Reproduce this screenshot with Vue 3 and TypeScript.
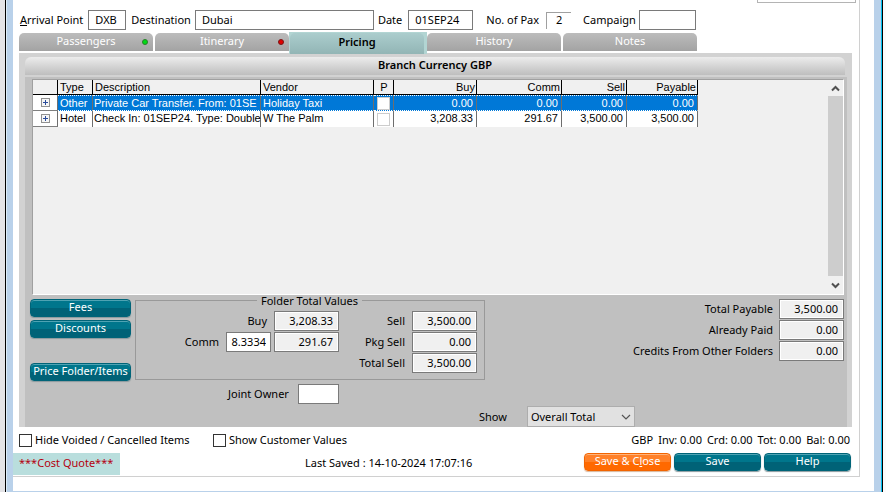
<script setup lang="ts">
import { ref } from 'vue'

interface Tab {
  name: string
  status?: 'ok' | 'alert'
}

interface Item {
  type: string
  description: string
  vendor: string
  picked: boolean
  buy: string
  comm: string
  sell: string
  payable: string
}

const tabs: Tab[] = [
  { name: 'Passengers', status: 'ok' },
  { name: 'Itinerary', status: 'alert' },
  { name: 'Pricing' },
  { name: 'History' },
  { name: 'Notes' },
]
const activeTab = ref('Pricing')

const items = ref<Item[]>([
  {
    type: 'Other', description: 'Private Car Transfer. From: 01SE', vendor: 'Holiday Taxi',
    picked: false, buy: '0.00', comm: '0.00', sell: '0.00', payable: '0.00',
  },
  {
    type: 'Hotel', description: 'Check In: 01SEP24. Type: Double', vendor: 'W The Palm',
    picked: false, buy: '3,208.33', comm: '291.67', sell: '3,500.00', payable: '3,500.00',
  },
])
const selectedRow = ref(0)

const totals = [
  { id: 'total-payable', label: 'Total Payable', value: '3,500.00' },
  { id: 'already-paid', label: 'Already Paid', value: '0.00' },
  { id: 'credits', label: 'Credits From Other Folders', value: '0.00' },
]

const arrival = ref('DXB')
const destination = ref('Dubai')
const date = ref('01SEP24')
const campaign = ref('')
const commRate = ref('8.3334')
const jointOwner = ref('')
const show = ref('Overall Total')
const hideVoided = ref(false)
const showCustomer = ref(false)
</script>

<template>
  <div class="desktop">
    <div class="window">
      <main class="sheet">
        <div class="upper"><div class="upper-box"></div></div>

        <form class="trip" @submit.prevent>
          <label for="arrival"><u>A</u>rrival Point</label>
          <input id="arrival" v-model="arrival" class="field w-code" />
          <label for="destination">Destination</label>
          <input id="destination" v-model="destination" class="field w-place" />
          <label for="date">Date</label>
          <input id="date" v-model="date" class="field w-date" />
          <label for="pax" class="pax-label">No. of Pax</label>
          <output id="pax" class="pax">2</output>
          <label for="campaign" class="campaign-label">Campaign</label>
          <input id="campaign" v-model="campaign" class="field w-campaign" />
        </form>

        <nav class="tabs">
          <button
            v-for="tab in tabs"
            :key="tab.name"
            type="button"
            class="tab"
            :class="{ active: tab.name === activeTab }"
            @click="activeTab = tab.name"
          >
            <span class="tab-face">{{ tab.name }}</span>
            <i v-if="tab.status" class="dot" :class="tab.status"></i>
          </button>
        </nav>

        <section class="panel">
          <h1 class="panel-title">Branch Currency GBP</h1>
          <div class="panel-body">
            <div class="grid-box">
              <div class="grid-area">
                <table class="items">
                  <colgroup>
                    <col class="c-expand" /><col class="c-type" /><col class="c-desc" /><col class="c-vendor" />
                    <col class="c-p" /><col class="c-buy" /><col class="c-comm" /><col class="c-sell" /><col class="c-pay" />
                  </colgroup>
                  <thead>
                    <tr>
                      <th></th>
                      <th>Type</th>
                      <th>Description</th>
                      <th>Vendor</th>
                      <th class="mid">P</th>
                      <th class="num">Buy</th>
                      <th class="num">Comm</th>
                      <th class="num">Sell</th>
                      <th class="num">Payable</th>
                    </tr>
                  </thead>
                  <tbody>
                    <tr
                      v-for="(item, i) in items"
                      :key="item.type"
                      :class="{ selected: i === selectedRow }"
                      @click="selectedRow = i"
                    >
                      <td class="expand">
                        <button type="button" class="plus" :aria-label="'Expand ' + item.type">
                          <svg width="9" height="9" viewBox="0 0 9 9" shape-rendering="crispEdges">
                            <rect x="0.5" y="0.5" width="8" height="8" fill="#f6f6f6" stroke="#919191" />
                            <path d="M2 4.5h5M4.5 2v5" stroke="#2b4c9b" />
                          </svg>
                        </button>
                      </td>
                      <td>{{ item.type }}</td>
                      <td class="desc">{{ item.description }}</td>
                      <td>{{ item.vendor }}</td>
                      <td class="pick">
                        <input v-model="item.picked" type="checkbox" :aria-label="'P ' + item.type" />
                      </td>
                      <td class="num">{{ item.buy }}</td>
                      <td class="num">{{ item.comm }}</td>
                      <td class="num">{{ item.sell }}</td>
                      <td class="num">{{ item.payable }}</td>
                    </tr>
                  </tbody>
                </table>
              </div>
              <div class="scrollbar">
                <button type="button" class="arrow" aria-label="Scroll up">
                  <svg width="9" height="7" viewBox="0 0 9 7"><path d="M1 5.5 4.5 2 8 5.5" fill="none" stroke="#505050" stroke-width="2" /></svg>
                </button>
                <div class="thumb"></div>
                <button type="button" class="arrow down" aria-label="Scroll down">
                  <svg width="9" height="7" viewBox="0 0 9 7"><path d="M1 1.5 4.5 5 8 1.5" fill="none" stroke="#505050" stroke-width="2" /></svg>
                </button>
              </div>
            </div>

            <div class="summary">
              <div class="actions">
                <button type="button" class="btn">Fees</button>
                <button type="button" class="btn">Discounts</button>
                <button type="button" class="btn last">Price Folder/Items</button>
              </div>

              <fieldset class="folder">
                <legend>Folder Total Values</legend>
                <div class="folder-grid">
                  <label for="buy" class="wide">Buy</label>
                  <input id="buy" class="field money" value="3,208.33" readonly />
                  <label for="sell">Sell</label>
                  <input id="sell" class="field money" value="3,500.00" readonly />

                  <label for="comm-rate">Comm</label>
                  <input id="comm-rate" v-model="commRate" class="field rate" />
                  <input class="field money" value="291.67" aria-label="Comm amount" readonly />
                  <label for="pkg">Pkg Sell</label>
                  <input id="pkg" class="field money" value="0.00" readonly />

                  <label for="total-sell" class="to-sell">Total Sell</label>
                  <input id="total-sell" class="field money" value="3,500.00" readonly />
                </div>
              </fieldset>

              <div class="totals">
                <template v-for="t in totals" :key="t.id">
                  <label :for="t.id">{{ t.label }}</label>
                  <input :id="t.id" class="field money" :value="t.value" readonly />
                </template>
              </div>
            </div>

            <div class="owner">
              <label for="owner">Joint Owner</label>
              <input id="owner" v-model="jointOwner" class="field" />
            </div>

            <div class="show">
              <label for="show">Show</label>
              <div class="select">
                <select id="show" v-model="show">
                  <option>Overall Total</option>
                </select>
                <svg width="10" height="6" viewBox="0 0 10 6"><path d="M1 1l4 4 4-4" fill="none" stroke="#555" stroke-width="1.2" /></svg>
              </div>
            </div>
          </div>
        </section>

        <div class="options">
          <label class="check"><input v-model="hideVoided" type="checkbox" />Hide Voided / Cancelled Items</label>
          <label class="check"><input v-model="showCustomer" type="checkbox" />Show Customer Values</label>
          <p class="balances">
            <span>GBP</span><span>Inv: 0.00</span><span>Crd: 0.00</span><span>Tot: 0.00</span><span>Bal: 0.00</span>
          </p>
        </div>

        <footer class="footer">
          <span class="quote">***Cost Quote***</span>
          <span class="saved">Last Saved : 14-10-2024 17:07:16</span>
          <div class="footer-actions">
            <button type="button" class="btn orange">Save &amp; C<u>l</u>ose</button>
            <button type="button" class="btn">Save</button>
            <button type="button" class="btn">Help</button>
          </div>
        </footer>
      </main>
    </div>
  </div>
</template>

<style>
body {
  margin: 0;
  background: #fbfbfb;
}
</style>

<style scoped>
* {
  box-sizing: border-box;
}

.desktop {
  min-height: 100vh;
  display: flex;
  padding: 0 3px 0 0;
  border-left: 5px solid #e3e3e6;
  font: 11px/14px "Noto Sans", "Open Sans", sans-serif;
  color: #000;
}

.window {
  flex: 1;
  min-width: 0;
  display: flex;
  border-left: 1px solid #000;
  border-right: 1px solid #000;
  box-shadow: inset 1px 0 #dcecf8, inset -1px 0 #00c0f0;
  background: #b9d1ea;
  padding: 0 8px 1px 7px;
}

.sheet {
  flex: 1;
  min-width: 0;
  background: linear-gradient(#d0d0d0, #d0d0d0) right 14px top / 1px 476px no-repeat, #fff;
}

button,
input,
select {
  font: inherit;
  color: inherit;
  margin: 0;
}

label {
  white-space: nowrap;
}

.upper {
  height: 10px;
  padding-right: 18px;
  display: flex;
  justify-content: flex-end;
}

.upper-box {
  width: 99px;
  height: 3px;
  border: 1px solid #b4b4b4;
  border-top: 0;
}

.field {
  height: 20px;
  min-width: 0;
  padding: 0 6px 1px;
  border: 1px solid #7a7a7a;
  border-radius: 0;
  background: #fff;
  outline: none;
}

.field[readonly] {
  background: #f0f0f0;
  box-shadow: inset 0 0 0 1px #fff;
}

.trip {
  display: flex;
  align-items: center;
  height: 20px;
  padding-left: 7px;
}

.trip .w-code { width: 38px; margin: 0 5px; }
.trip .w-place { width: 179px; margin: 0 4px; }
.trip .w-date { width: 65px; margin-left: 6px; }
.trip .w-campaign { width: 57px; margin-left: 3px; }

.pax-label { margin-left: 13px; }
.campaign-label { margin-left: 12px; }

.pax {
  width: 25px;
  height: 17px;
  margin-left: 7px;
  text-align: center;
  border: 1px solid #a0a0a0;
  border-right: 0;
  border-bottom: 0;
}

.tabs {
  display: flex;
  align-items: flex-start;
  gap: 2px;
  height: 23px;
  padding: 3px 0 0 6px;
}

.tab {
  position: relative;
  width: 134px;
  height: 18px;
  padding: 0;
  border: 0;
  border-radius: 5px 5px 0 0;
  background: linear-gradient(#bcbcbc, #a3a3a3);
  color: #fff;
  line-height: 16px;
}

.tab-face {
  display: block;
  height: 18px;
}

.tab.active {
  width: 138px;
  height: 22px;
  margin: -1px -2px 0;
  padding: 1px 3px 0 1px;
  border-radius: 0;
  background: #b2d5d3;
  color: #000;
  font-weight: 600;
  line-height: 18px;
  z-index: 1;
}

.tab.active .tab-face {
  height: 21px;
  border-radius: 5px 5px 0 0;
  background: linear-gradient(#abcdcd, #92b5b5);
}

.dot {
  position: absolute;
  right: 5px;
  top: 6px;
  width: 6px;
  height: 6px;
  border: 1px solid #444;
  border-radius: 50%;
}

.dot.ok { background: #00dc14; border-color: #2a7f2a; }
.dot.alert { background: #e00000; border-color: #7a1515; }

.panel {
  margin: 0 22px 0 6px;
  padding: 4px 5px 0 6px;
  background: #d2d2d2;
}

.panel-title {
  margin: 0 2px 2px 0;
  height: 18px;
  border-radius: 6px 6px 0 0;
  background: linear-gradient(#ececec, #bebebe);
  font-size: 11px;
  font-weight: 600;
  line-height: 16px;
  text-align: center;
}

.panel-body {
  background: #c0c0c0;
  padding: 2px 3px 0 5px;
}

.grid-box {
  display: flex;
  height: 216px;
  margin-left: 2px;
  border: 1px solid #fff;
  border-top-color: #a0a0a0;
  border-left-color: #a0a0a0;
  background: #f0f0f0;
}

.grid-area {
  flex: 1;
  min-width: 0;
  overflow: hidden;
}

.items {
  table-layout: fixed;
  width: 665px;
  border-collapse: separate;
  border-spacing: 0;
  font: 11px/13px "Liberation Sans", Arial, sans-serif;
}

.c-expand { width: 25px; }
.c-type { width: 35px; }
.c-desc { width: 168px; }
.c-vendor { width: 113px; }
.c-p { width: 20px; }
.c-buy { width: 83px; }
.c-comm { width: 85px; }
.c-sell { width: 65px; }
.c-pay { width: 71px; }

.items th {
  height: 15px;
  padding: 0 1px 0 2px;
  border-right: 1px solid #000;
  border-bottom: 1px solid #000;
  font-weight: 400;
  text-align: left;
}

.items td {
  height: 16px;
  padding: 0 3px 1px 2px;
  border-right: 1px solid #6e6e6e;
  background: #fff;
  white-space: nowrap;
}

.items td.desc { padding: 0 0 1px 1px; }

.items .num { text-align: right; }
.items .mid { text-align: center; }

.items td.expand {
  padding: 0;
  border-bottom: 1px solid #808080;
  text-align: center;
}

.plus {
  display: block;
  width: 9px;
  height: 9px;
  margin: 0 auto;
  padding: 0;
  border: 0;
  background: none;
}

.plus svg { display: block; }

.items .selected td:not(.expand) {
  background: #0078d7;
  color: #fff;
  border-top: 1px dotted #fff;
  border-bottom: 1px dotted #fff;
  padding-bottom: 0;
}

.items td.pick { padding: 0; }

.pick input {
  appearance: none;
  display: block;
  width: 13px;
  height: 13px;
  margin: 1px auto 0;
  border: 1px solid #ccc;
  background: #fff;
}

.scrollbar {
  display: flex;
  flex-direction: column;
  width: 15px;
}

.arrow {
  display: grid;
  place-items: center;
  height: 16px;
  padding: 0;
  border: 0;
  background: #f0f0f0;
}

.arrow.down { height: 18px; }

.thumb {
  flex: 1;
  background: #cdcdcd;
}

.summary {
  display: flex;
  gap: 4px;
  height: 82px;
  margin-top: 4px;
}

.actions {
  display: flex;
  flex-direction: column;
  gap: 3px;
  width: 101px;
}

.btn {
  height: 18px;
  padding: 0 0 2px;
  border: 1px solid #006478;
  border-radius: 4px;
  background: linear-gradient(#00768c 50%, #006277 50%);
  box-shadow: inset 0 1px #4fa3b3, 0 1px 1px #8a9a9e;
  color: #fff;
  line-height: 14px;
  white-space: nowrap;
}

.btn.last { margin-top: auto; }

.btn.orange {
  border-color: #f26400;
  background: linear-gradient(#ff8129 50%, #ff6900 50%);
  box-shadow: inset 0 1px #ffb37a, 0 1px 1px #d8b59a;
}

.folder {
  position: relative;
  width: 350px;
  height: 80px;
  margin: 1px 0 0;
  padding: 10px 7px 0;
  border: 1px solid #999;
  min-width: 0;
}

.folder legend {
  position: absolute;
  top: -6px;
  left: 121px;
  padding: 0 4px;
  background: #c0c0c0;
  line-height: 12px;
  white-space: nowrap;
}

.folder-grid {
  display: grid;
  grid-template-columns: 1fr 45px 65px 67px 65px;
  gap: 1px 3px;
  align-items: center;
}

.folder-grid label { text-align: right; padding-right: 4px; }
.folder-grid label.wide { grid-column: 1 / 3; }
.folder-grid label.to-sell { grid-column: 4; }
.folder-grid .rate { width: 45px; padding: 0 4px 1px; text-align: right; }

.money {
  width: 65px;
  padding: 0 5px 1px;
  text-align: right;
}

.totals {
  margin-left: auto;
  display: grid;
  grid-template-columns: auto 65px;
  grid-auto-rows: 20px;
  gap: 1px 6px;
  align-items: center;
  text-align: right;
}

.owner {
  display: flex;
  align-items: center;
  gap: 9px;
  margin-top: 3px;
  padding-left: 198px;
}

.owner .field { width: 41px; }

.show {
  display: flex;
  align-items: center;
  gap: 20px;
  margin-top: 2px;
  padding-left: 449px;
}

.select {
  position: relative;
  width: 108px;
  height: 21px;
}

.select select {
  appearance: none;
  display: block;
  width: 100%;
  height: 100%;
  padding: 0 3px;
  border: 1px solid #adadad;
  border-radius: 0;
  background: #e1e1e1;
}

.select svg {
  position: absolute;
  right: 4px;
  top: 8px;
  pointer-events: none;
}

.options {
  display: flex;
  align-items: center;
  height: 26px;
  padding: 0 24px 0 6px;
}

.check {
  display: flex;
  align-items: center;
  gap: 3px;
  width: 194px;
}

.check input {
  appearance: none;
  width: 13px;
  height: 13px;
  border: 1px solid #333;
  background: #fff;
}

.check input:checked { background: #333; }

.balances {
  display: flex;
  gap: 5px;
  margin: 0 0 0 auto;
  white-space: nowrap;
}

.footer {
  display: flex;
  align-items: flex-start;
  height: 24px;
  margin-right: 14px;
  border-bottom: 1px solid #d0d0d0;
}

.quote {
  width: 107px;
  height: 22px;
  padding-left: 6px;
  background: #b9dedd;
  color: #b40010;
  line-height: 20px;
}

.saved {
  margin-left: 185px;
  line-height: 20px;
}

.footer-actions {
  display: flex;
  gap: 3px;
  margin: 0 9px 0 auto;
}

.footer-actions .btn { width: 87px; }
</style>
